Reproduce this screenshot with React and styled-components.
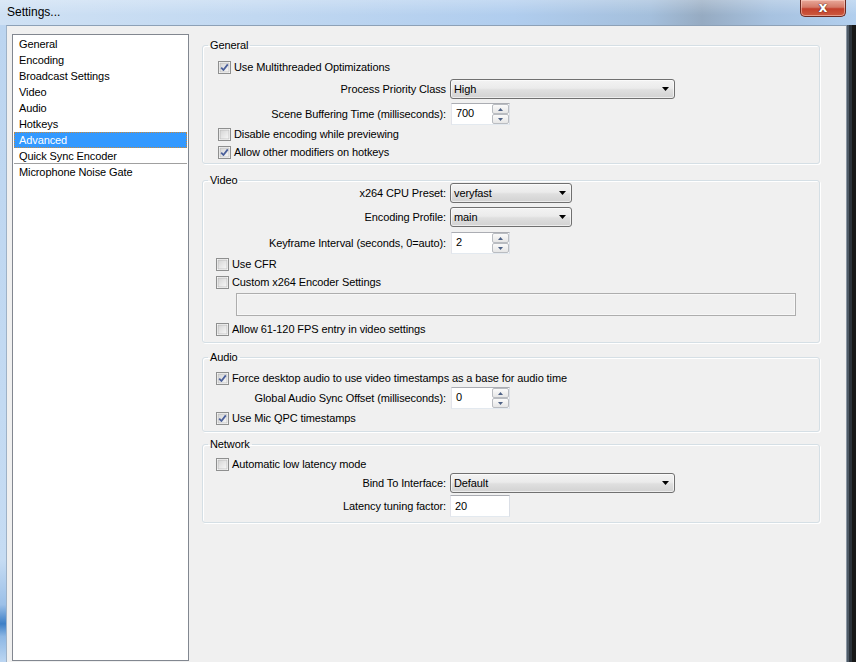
import React from 'react'
import styled, { createGlobalStyle } from 'styled-components'

const GlobalStyle = createGlobalStyle`
  html, body { margin: 0; padding: 0; }
  body {
    font-family: "Liberation Sans", Arial, sans-serif;
    font-size: 11px;
    letter-spacing: -0.1px;
    color: #000;
    background: #f0f0f0;
  }
  #root { width: 856px; height: 662px; overflow: hidden; }
`

const pages = [
  'General',
  'Encoding',
  'Broadcast Settings',
  'Video',
  'Audio',
  'Hotkeys',
  'Advanced',
  'Quick Sync Encoder',
  'Microphone Noise Gate',
]

const CheckIcon = ({ checked }) => (
  <svg width="13" height="13" viewBox="0 0 13 13">
    <defs>
      <linearGradient id="cbg" x1="0" y1="0" x2="1" y2="1">
        <stop offset="0" stopColor="#d4d4d4" />
        <stop offset="1" stopColor="#f8f8f8" />
      </linearGradient>
    </defs>
    <rect x="0.5" y="0.5" width="12" height="12" fill="#fff" stroke="#8e8f8f" />
    <rect x="2" y="2" width="9" height="9" fill="url(#cbg)" stroke="#b0b0b0" strokeWidth="0.6" />
    {checked && (
      <path d="M3.2 6.6 L5.4 9 L9.8 3.4" fill="none" stroke="#4a5f9a" strokeWidth="1.8" strokeLinejoin="round" />
    )}
  </svg>
)

const Arrow = () => (
  <svg width="7" height="4" viewBox="0 0 7 4">
    <path d="M0 0 L7 0 L3.5 4 Z" fill="#000" />
  </svg>
)

const SmallArrow = ({ up }) => (
  <svg width="5" height="3" viewBox="0 0 5 3">
    <path d={up ? 'M0 3 L2.5 0 L5 3 Z' : 'M0 0 L5 0 L2.5 3 Z'} fill="#4d6185" />
  </svg>
)

const Check = ({ checked, indent, mt, children }) => (
  <CheckRow $indent={indent} $mt={mt}>
    <CheckIcon checked={checked} />
    <span>{children}</span>
  </CheckRow>
)

const Dropdown = ({ value, width }) => (
  <Combo $w={width}>
    <ComboText>{value}</ComboText>
    <ComboArrow><Arrow /></ComboArrow>
  </Combo>
)

const Spin = ({ value }) => (
  <SpinBox>
    <EditText>{value}</EditText>
    <Spinner>
      <SpinButton><SmallArrow up /></SpinButton>
      <SpinButton><SmallArrow /></SpinButton>
    </Spinner>
  </SpinBox>
)

const Field = ({ label, mt, h, children }) => (
  <FieldRow $mt={mt} $h={h}>
    <FieldLabel>{label}</FieldLabel>
    {children}
  </FieldRow>
)

export default function App() {
  return (
    <Window>
      <GlobalStyle />
      <TitleBar>
        <Title>Settings...</Title>
        <CloseButton>
          <CloseX>x</CloseX>
        </CloseButton>
      </TitleBar>
      <Body>
        <LeftFrame />
        <Client>
          <ListBox>
            {pages.map((p) => (
              <ListItem key={p} $selected={p === 'Advanced'} $sep={p === 'Quick Sync Encoder'}>
                {p}
              </ListItem>
            ))}
          </ListBox>
          <Panel>
            <Group $pb={3}>
              <Legend>General</Legend>
              <Check checked indent={15} mt={7}>Use Multithreaded Optimizations</Check>
              <Field label="Process Priority Class" mt={4} h={20}>
                <Dropdown value="High" width={225} />
              </Field>
              <Field label="Scene Buffering Time (milliseconds):" mt={4} h={22}>
                <Spin value="700" />
              </Field>
              <Check indent={15} mt={1}>Disable encoding while previewing</Check>
              <Check checked indent={15} mt={2}>Allow other modifiers on hotkeys</Check>
            </Group>

            <Group $mt={9} $pb={5}>
              <Legend>Video</Legend>
              <Field label="x264 CPU Preset:" mt={-4} h={20}>
                <Dropdown value="veryfast" width={122} />
              </Field>
              <Field label="Encoding Profile:" mt={4} h={20}>
                <Dropdown value="main" width={122} />
              </Field>
              <Field label="Keyframe Interval (seconds, 0=auto):" mt={5} h={22}>
                <Spin value="2" />
              </Field>
              <Check indent={13} mt={2}>Use CFR</Check>
              <Check indent={13} mt={2}>Custom x264 Encoder Settings</Check>
              <DisabledEdit />
              <Check indent={13} mt={5}>Allow 61-120 FPS entry in video settings</Check>
            </Group>

            <Group $mt={7} $pb={5}>
              <Legend>Audio</Legend>
              <Check checked indent={13} mt={6}>Force desktop audio to use video timestamps as a base for audio time</Check>
              <Field label="Global Audio Sync Offset (milliseconds):" mt={1} h={22}>
                <Spin value="0" />
              </Field>
              <Check checked indent={13} mt={1}>Use Mic QPC timestamps</Check>
            </Group>

            <Group $mt={5} $pb={5}>
              <Legend>Network</Legend>
              <Check indent={13} mt={5}>Automatic low latency mode</Check>
              <Field label="Bind To Interface:" mt={1} h={20}>
                <Dropdown value="Default" width={225} />
              </Field>
              <Field label="Latency tuning factor:" mt={2} h={22}>
                <Edit>20</Edit>
              </Field>
            </Group>
          </Panel>
        </Client>
        <RightFrame />
      </Body>
    </Window>
  )
}

const Window = styled.div`
  display: flex;
  flex-direction: column;
  width: 856px;
  height: 662px;
  overflow: hidden;
`

const TitleBar = styled.div`
  flex: none;
  height: 25px;
  display: flex;
  align-items: flex-start;
  padding: 0 10px 0 7px;
  background:
    linear-gradient(180deg, rgba(255,255,255,0.25), rgba(255,255,255,0) 60%),
    linear-gradient(90deg, #cfe1f4 0%, #c1d8f1 30%, #b0cdee 60%, #a4bfdc 76%, #96abc2 82%, #a7c2e0 90%, #b2cfee 100%);
`

const Title = styled.span`
  margin-top: 6px;
  font-size: 12px;
  line-height: 13px;
  letter-spacing: 0;
`

const CloseButton = styled.div`
  margin-left: auto;
  width: 46px;
  height: 17px;
  box-sizing: border-box;
  border: 1px solid #6b2a22;
  border-top: none;
  border-radius: 0 0 5px 5px;
  background: linear-gradient(180deg, #e9a99a 0%, #d47a68 45%, #c3402c 55%, #cc5a3f 100%);
  box-shadow: inset 0 0 0 1px rgba(255, 220, 210, 0.5);
  display: flex;
  align-items: center;
  justify-content: center;
`

const CloseX = styled.span`
  font-family: "DejaVu Sans", sans-serif;
  font-weight: bold;
  font-size: 14px;
  line-height: 14px;
  color: #fff;
  margin-top: -3px;
  text-shadow: 0 0 1px #3a1510, 0 0 1px #3a1510;
`

const Body = styled.div`
  flex: 1;
  display: flex;
  min-height: 0;
`

const LeftFrame = styled.div`
  width: 6px;
  flex: none;
  background: linear-gradient(180deg, #bcd5f0 0%, #c6dcf3 84%, #9cc0e8 91%, #3d7fc6 94%, #8db7e4 96%, #bcd6f2 100%);
`

const RightFrame = styled.div`
  width: 10px;
  flex: none;
  background: linear-gradient(90deg, #8a96a3 0 1px, #4e5a66 1px 3px, #2c333b 3px 6px, #181818 6px);
`

const Client = styled.div`
  flex: 1;
  display: flex;
  gap: 13px;
  padding: 8px 26px 1px 5px;
  background: #f0f0f0;
  border-top: 1px solid #8da1b7;
  border-left: 1px solid #9eb2c7;
  min-width: 0;
`

const ListBox = styled.div`
  width: 177px;
  flex: none;
  box-sizing: border-box;
  border: 1px solid #828790;
  background: #fff;
  padding: 1px 1px 0;
`

const ListItem = styled.div`
  height: 16px;
  line-height: 16px;
  box-sizing: border-box;
  padding-left: 5px;
  white-space: nowrap;
  color: ${(p) => (p.$selected ? '#fff' : '#000')};
  background: ${(p) => (p.$selected ? '#3399ff' : 'transparent')};
  outline: ${(p) => (p.$selected ? '1px dotted #c98a3c' : 'none')};
  outline-offset: -1px;
  border-bottom: ${(p) => (p.$sep ? '1px solid #a0a0a0' : 'none')};
`

const Panel = styled.div`
  flex: 1;
  display: flex;
  flex-direction: column;
  padding-top: 4px;
  min-width: 0;
`

const Group = styled.fieldset`
  margin: ${(p) => p.$mt || 0}px 0 0;
  padding: 0 0 ${(p) => p.$pb}px;
  border: 1px solid #d5dfe5;
  border-radius: 3px;
  box-shadow: 1px 1px 0 #fff, inset 1px 1px 0 #fff;
  display: flex;
  flex-direction: column;
  min-width: 0;
`

const Legend = styled.legend`
  margin-left: 5px;
  padding: 0 2px;
  line-height: 14px;
  font-size: 11px;
`

const CheckRow = styled.label`
  display: flex;
  align-items: center;
  gap: 3px;
  height: 16px;
  flex: none;
  margin-top: ${(p) => p.$mt || 0}px;
  padding-left: ${(p) => p.$indent}px;
  white-space: nowrap;

  svg { flex: none; }
`

const FieldRow = styled.div`
  display: flex;
  align-items: center;
  flex: none;
  height: ${(p) => p.$h}px;
  margin-top: ${(p) => p.$mt || 0}px;
`

const FieldLabel = styled.span`
  width: 243px;
  flex: none;
  margin-right: 4px;
  text-align: right;
  white-space: nowrap;
`

const Combo = styled.div`
  width: ${(p) => p.$w}px;
  height: 20px;
  box-sizing: border-box;
  border: 1px solid #707070;
  border-radius: 3px;
  background: linear-gradient(180deg, #f3f3f3 0%, #ebebeb 45%, #dfdfdf 55%, #d2d2d2 100%);
  box-shadow: inset 0 0 0 1px rgba(255, 255, 255, 0.6);
  display: flex;
  align-items: center;
  padding-left: 3px;
`

const ComboText = styled.span`
  flex: 1;
`

const ComboArrow = styled.span`
  display: flex;
  margin-right: 5px;
`

const Edit = styled.div`
  width: 60px;
  height: 22px;
  box-sizing: border-box;
  border: 1px solid;
  border-color: #abadb3 #dbdfe6 #e3e9ef #e2e3ea;
  background: #fff;
  padding-left: 4px;
  display: flex;
  align-items: center;
`

const SpinBox = styled(Edit)`
  width: 59px;
  margin-left: 1px;
  padding-right: 0;
`

const EditText = styled.span`
  flex: 1;
  margin-top: -2px;
`

const Spinner = styled.div`
  width: 17px;
  height: 20px;
  display: flex;
  flex-direction: column;
`

const SpinButton = styled.div`
  flex: 1;
  box-sizing: border-box;
  border: 1px solid #b9bcc1;
  border-radius: 2px;
  background: linear-gradient(180deg, #fafafa 0%, #e6e6e6 100%);
  display: flex;
  align-items: center;
  justify-content: center;
`

const DisabledEdit = styled.div`
  height: 23px;
  flex: none;
  box-sizing: border-box;
  margin: 3px 23px 0 33px;
  border: 1px solid #adadad;
  box-shadow: inset 0 0 0 1px #f7f7f7;
  background: #f0f0f0;
`
